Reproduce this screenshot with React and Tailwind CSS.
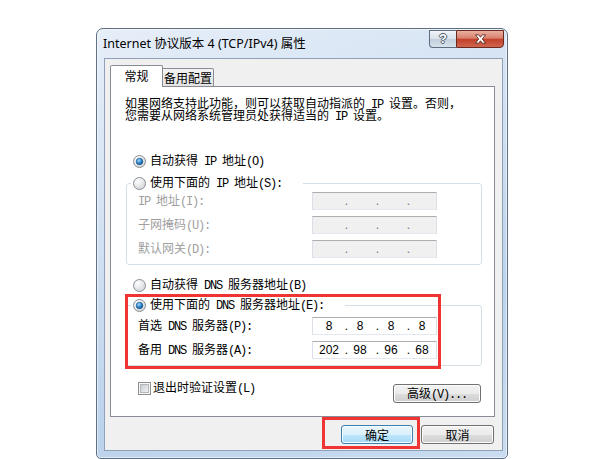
import React from 'react';

// SimSun-style half-width: ASCII runs get a mono face squeezed to 6px per char
const Txt = ({ s }) => (
    <span>
        {s.split(/([\x20-\x7e]+)/).filter(Boolean).map((p, i) =>
            /^[\x20-\x7e]+$/.test(p) ? (
                <span key={i} className="font-['Liberation_Mono',monospace] tracking-[-1.2px]">{p}</span>
            ) : (
                <span key={i}>{p}</span>
            )
        )}
    </span>
);

const Radio = ({ on }) => (
    <svg width="13" height="13" viewBox="0 0 13 13" className="shrink-0">
        <defs>
            <radialGradient id="radioFill" cx="0.35" cy="0.3" r="0.8">
                <stop offset="0" stopColor="#ffffff" />
                <stop offset="1" stopColor="#cfd3d8" />
            </radialGradient>
            <radialGradient id="radioDot" cx="0.4" cy="0.35" r="0.7">
                <stop offset="0" stopColor="#9fdcff" />
                <stop offset="0.6" stopColor="#2a80c8" />
                <stop offset="1" stopColor="#0c4a86" />
            </radialGradient>
        </defs>
        <circle cx="6.5" cy="6.5" r="6" fill="url(#radioFill)" stroke="#8a8f96" />
        {on && <circle cx="6.5" cy="6.5" r="3.3" fill="url(#radioDot)" stroke="#1b4f80" strokeWidth="0.6" />}
    </svg>
);

const Checkbox = () => (
    <svg width="13" height="13" viewBox="0 0 13 13" className="shrink-0">
        <defs>
            <linearGradient id="cbFill" x1="0" y1="0" x2="1" y2="1">
                <stop offset="0" stopColor="#c6cad0" />
                <stop offset="1" stopColor="#f4f4f4" />
            </linearGradient>
        </defs>
        <rect x="0.5" y="0.5" width="12" height="12" fill="#f7f7f7" stroke="#8e8f8f" />
        <rect x="2.5" y="2.5" width="8" height="8" fill="url(#cbFill)" stroke="#b4b8be" />
    </svg>
);

const IpField = ({ parts, disabled }) => (
    <div
        className={`flex h-[18px] w-[125px] items-center border border-t-[#abadb3] border-x-[#dbdfe6] border-b-[#e3e9ef] pl-[4px] font-['Liberation_Sans',sans-serif] text-[12px] leading-[14px] ${
            disabled ? 'bg-[#f0f0f0] text-[#6d6d6d]' : 'bg-white text-black'
        }`}
    >
        {parts.map((p, i) => (
            <React.Fragment key={i}>
                {i > 0 && <span className="flex w-[7px] justify-end">.</span>}
                <span className="w-[24px] text-center">{p}</span>
            </React.Fragment>
        ))}
    </div>
);

const Btn = ({ label, def, width }) => (
    <div
        className={`flex h-[19px] items-center justify-center rounded-[3px] border text-[12px] leading-[14px] ${width} ${
            def
                ? 'border-[#3c7fb1] bg-[linear-gradient(180deg,#eaf6fd_0%,#d9f0fc_50%,#bee6fd_51%,#a7d9f5_100%)] shadow-[inset_0_0_0_1px_#f2fbff]'
                : 'border-[#707070] bg-[linear-gradient(180deg,#f2f2f2_0%,#ebebeb_50%,#dddddd_51%,#cfcfcf_100%)] shadow-[inset_0_0_0_1px_#fcfcfc]'
        }`}
    >
        <Txt s={label} />
    </div>
);

const Row = ({ label, parts, disabled, first }) => (
    <div className={`flex h-[18px] items-center pl-[11px] ${first ? 'mt-[1px]' : 'mt-[6px]'}`}>
        <span className={`flex h-[14px] w-[174px] items-center ${disabled ? 'text-[#a0a0a0]' : 'text-black'}`}>
            <Txt s={label} />
        </span>
        <IpField parts={parts} disabled={disabled} />
    </div>
);

export default function App() {
    return (
        <div className="relative h-[459px] w-[600px] overflow-hidden bg-white pl-[96px] pt-[28px] font-['Noto_Sans_CJK_SC',sans-serif] text-[12px] leading-[14px] text-black">
            {/* Window frame */}
            <div className="flex h-[431px] w-[412px] flex-col rounded-t-[7px] rounded-b-[5px] border border-[#5f6f83] bg-[linear-gradient(160deg,#e6eef8_0%,#d3e2f3_35%,#bcd3ec_70%,#c9dcf0_100%)] shadow-[inset_0_0_0_1px_rgba(255,255,255,0.55)]">
                {/* Title bar */}
                <div className="flex h-[29px] items-start justify-between">
                    <div className="pl-[6px] pt-[7px] font-['Noto_Sans','Noto_Sans_CJK_SC',sans-serif] text-[12.5px] leading-[16px] text-black">
                        Internet 协议版本 4 (TCP/IPv4) 属性
                    </div>
                    <div className="mr-[3px] mt-[1px] flex">
                        <div className="flex h-[18px] w-[27px] items-center justify-center rounded-bl-[4px] border border-r-0 border-[#5e6c80] bg-[linear-gradient(180deg,#f1f4f8_0%,#d8e1ea_50%,#c2cedb_51%,#d8e2ec_100%)] font-['Liberation_Sans',sans-serif] text-[13px] font-bold leading-[14px] text-white [text-shadow:-1px_0_#4d5866,1px_0_#4d5866,0_-1px_#4d5866,0_1px_#4d5866]">
                            ?
                        </div>
                        <div className="flex h-[18px] w-[48px] items-center justify-center rounded-br-[4px] border border-[#6b2a20] bg-[linear-gradient(180deg,#eab0a2_0%,#d8806c_45%,#c2412b_52%,#d0654f_100%)]">
                            <svg width="13" height="10" viewBox="0 0 13 10">
                                <path
                                    d="M1.5 0.8h3.2l1.8 2.4 1.8-2.4h3.2L8.3 5l3.2 4.2H8.3L6.5 6.8 4.7 9.2H1.5L4.7 5z"
                                    fill="#ffffff"
                                    stroke="#4a1a12"
                                    strokeWidth="0.8"
                                    strokeLinejoin="round"
                                />
                            </svg>
                        </div>
                    </div>
                </div>

                {/* Client area */}
                <div className="ml-[7px] flex h-[393px] w-[399px] flex-col border border-[#8fa1b6] bg-[#f0f0f0] pl-[5px] pr-[8px] pt-[6px]">
                    {/* Tabs */}
                    <div className="relative z-10 -mb-[1px] flex h-[22px] items-end">
                        <div className="flex h-[22px] w-[53px] items-center justify-center rounded-t-[2px] border-x border-t border-[#898c95] bg-white pb-[1px]">
                            常规
                        </div>
                        <div className="flex h-[19px] w-[51px] items-center justify-center rounded-tr-[2px] border-y border-r border-[#898c95] bg-[linear-gradient(180deg,#f3f3f3,#e3e3e3)]">
                            备用配置
                        </div>
                    </div>

                    {/* Panel */}
                    <div className="flex h-[331px] w-[385px] flex-col border border-[#898c95] bg-white">
                        <div className="mt-[11px] flex h-[12px] items-center pl-[14px] leading-[12px]">
                            <Txt s="如果网络支持此功能，则可以获取自动指派的 IP 设置。否则，" />
                        </div>
                        <div className="flex h-[12px] items-center pl-[14px] leading-[12px]">
                            <Txt s="您需要从网络系统管理员处获得适当的 IP 设置。" />
                        </div>

                        <div className="mt-[31px] flex h-[16px] items-center gap-[4px] pl-[22px]">
                            <Radio on />
                            <Txt s="自动获得 IP 地址(O)" />
                        </div>

                        {/* Static IP group */}
                        <div className="ml-[15px] mt-[14px] flex w-[356px] flex-col rounded-[3px] border border-[#d5dfe5] pb-[6px]">
                            <div className="ml-[4px] -mt-[9px] flex h-[16px] w-[172px] items-center gap-[4px] bg-white pl-[2px]">
                                <Radio />
                                <Txt s="使用下面的 IP 地址(S):" />
                            </div>
                            <Row first disabled label="IP 地址(I):" parts={['', '', '', '']} />
                            <Row disabled label="子网掩码(U):" parts={['', '', '', '']} />
                            <Row disabled label="默认网关(D):" parts={['', '', '', '']} />
                        </div>

                        <div className="mt-[12px] flex h-[16px] items-center gap-[4px] pl-[22px]">
                            <Radio />
                            <Txt s="自动获得 DNS 服务器地址(B)" />
                        </div>

                        {/* DNS group */}
                        <div className="ml-[15px] mt-[12px] flex w-[356px] flex-col rounded-[3px] border border-[#d5dfe5] pb-[6px]">
                            <div className="ml-[4px] -mt-[9px] flex h-[16px] w-[214px] items-center gap-[4px] bg-white pl-[2px]">
                                <Radio on />
                                <Txt s="使用下面的 DNS 服务器地址(E):" />
                            </div>
                            <div className="mt-[3px]" />
                            <Row first label="首选 DNS 服务器(P):" parts={['8', '8', '8', '8']} />
                            <Row label="备用 DNS 服务器(A):" parts={['202', '98', '96', '68']} />
                        </div>

                        <div className="mt-[14px] flex items-start justify-between pl-[27px] pr-[13px]">
                            <div className="flex h-[16px] items-center gap-[2px]">
                                <Checkbox />
                                <Txt s="退出时验证设置(L)" />
                            </div>
                            <div className="mt-[4px]">
                                <Btn label="高级(V)..." width="w-[88px]" />
                            </div>
                        </div>
                    </div>

                    {/* Dialog buttons */}
                    <div className="mt-[8px] flex justify-end gap-[8px]">
                        <Btn def label="确定" width="w-[72px]" />
                        <Btn label="取消" width="w-[73px]" />
                    </div>
                </div>
            </div>

            {/* Red annotation boxes */}
            <div className="absolute left-[125px] top-[294px] h-[75px] w-[316px] border-[3px] border-[#f03434]" />
            <div className="absolute left-[322px] top-[417px] h-[32px] w-[98px] border-[3px] border-[#f03434]" />
        </div>
    );
}
